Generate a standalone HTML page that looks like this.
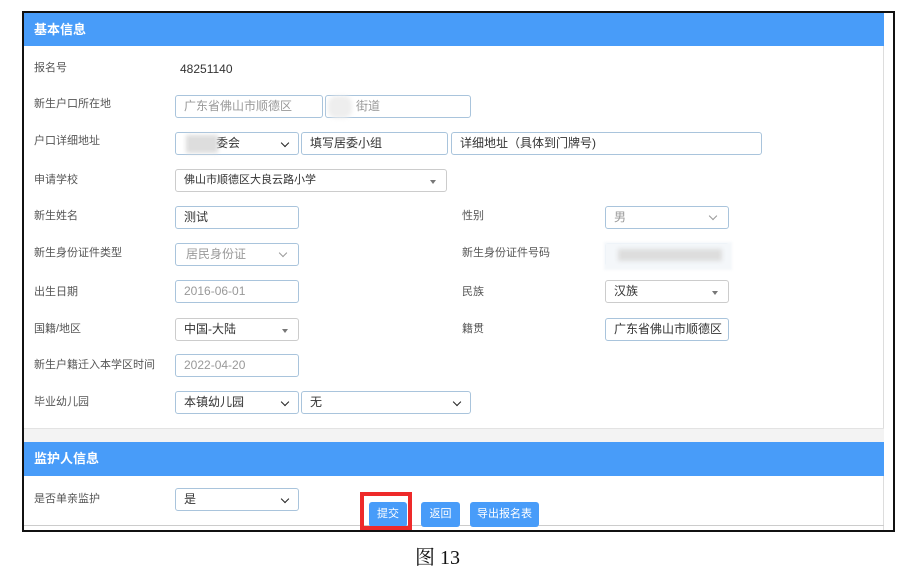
<!DOCTYPE html>
<html><head><meta charset="utf-8"><style>
*{margin:0;padding:0;box-sizing:border-box}
body{width:915px;height:583px;background:#fff;position:relative;overflow:hidden;font-family:"Liberation Sans","Noto Sans CJK SC",sans-serif;font-size:12px;color:#333}
.a{position:absolute}
.frame{left:22px;top:11px;width:873px;height:521px;border:2px solid #111;border-right-width:2px}
.hd{background:#489cf9;color:#fff;font-weight:bold;font-size:13px;padding-left:10px;line-height:34px}
.lb{font-size:11px;color:#555}
.in{border:1px solid #a9c4dc;border-radius:3px;height:23px;line-height:21px;padding-left:8px;font-size:12px;color:#333;background:#fff}
.ph{color:#999}
.ch::after{content:"";position:absolute;right:10px;top:7px;width:5px;height:5px;border-right:1.6px solid #222;border-bottom:1.6px solid #222;transform:rotate(45deg)}
.chl::after{content:"";position:absolute;right:12px;top:6px;width:5px;height:5px;border-right:1px solid #999;border-bottom:1px solid #999;transform:rotate(45deg)}
.tri::after{content:"";position:absolute;right:10px;top:10px;border:3px solid transparent;border-top:4px solid #777}
.btn{background:#489cf9;color:#fff;border-radius:3px;height:25px;line-height:25px;text-align:center;font-size:11px}
.blur{background:#ddd;filter:blur(2px)}
</style></head><body>
<div class="a frame"></div>
<div class="a" style="left:883px;top:13px;width:1px;height:517px;background:#ddd"></div>
<div class="a hd" style="left:24px;top:13px;width:860px;height:33px">基本信息</div>

<div class="a lb" style="left:34px;top:59px">报名号</div>
<div class="a" style="left:180px;top:62px;font-size:12px">48251140</div>

<div class="a lb" style="left:34px;top:95px">新生户口所在地</div>
<div class="a in ph" style="left:175px;top:95px;width:148px">广东省佛山市顺德区</div>
<div class="a in ph" style="left:325px;top:95px;width:146px;padding-left:30px">街道</div>
<div class="a blur" style="left:328px;top:96px;width:24px;height:22px;background:#eee;border-radius:8px"></div>

<div class="a lb" style="left:34px;top:132px">户口详细地址</div>
<div class="a in ch" style="left:175px;top:132px;width:124px;padding-left:40px">委会</div>
<div class="a blur" style="left:186px;top:135px;width:32px;height:18px"></div>
<div class="a in" style="left:301px;top:132px;width:147px">填写居委小组</div>
<div class="a in" style="left:451px;top:132px;width:311px">详细地址（具体到门牌号)</div>

<div class="a lb" style="left:34px;top:171px">申请学校</div>
<div class="a in tri" style="left:175px;top:169px;width:272px;border-color:#ccc;font-size:11px">佛山市顺德区大良云路小学</div>

<div class="a lb" style="left:34px;top:207px">新生姓名</div>
<div class="a in" style="left:175px;top:206px;width:124px">测试</div>
<div class="a lb" style="left:462px;top:207px">性别</div>
<div class="a in chl ph" style="left:605px;top:206px;width:124px">男</div>

<div class="a lb" style="left:34px;top:244px">新生身份证件类型</div>
<div class="a in chl ph" style="left:175px;top:243px;width:124px;padding-left:10px">居民身份证</div>
<div class="a lb" style="left:462px;top:244px">新生身份证件号码</div>
<div class="a in" style="left:605px;top:243px;width:124px"></div>
<div class="a" style="left:604px;top:242px;width:128px;height:28px;background:#f4f7fa;filter:blur(1px)"></div>
<div class="a blur" style="left:618px;top:249px;width:104px;height:12px"></div>

<div class="a lb" style="left:34px;top:283px">出生日期</div>
<div class="a in ph" style="left:175px;top:280px;width:124px">2016-06-01</div>
<div class="a lb" style="left:462px;top:283px">民族</div>
<div class="a in tri" style="left:605px;top:280px;width:124px;border-color:#ccc">汉族</div>

<div class="a lb" style="left:34px;top:320px">国籍/地区</div>
<div class="a in tri" style="left:175px;top:318px;width:124px;border-color:#ccc">中国-大陆</div>
<div class="a lb" style="left:462px;top:320px">籍贯</div>
<div class="a in" style="left:605px;top:318px;width:124px">广东省佛山市顺德区</div>

<div class="a lb" style="left:34px;top:356px">新生户籍迁入本学区时间</div>
<div class="a in ph" style="left:175px;top:354px;width:124px">2022-04-20</div>

<div class="a lb" style="left:34px;top:393px">毕业幼儿园</div>
<div class="a in ch" style="left:175px;top:391px;width:124px">本镇幼儿园</div>
<div class="a in ch" style="left:301px;top:391px;width:170px">无</div>

<div class="a" style="left:24px;top:428px;width:860px;height:14px;background:#f3f3f3;border-top:1px solid #e3e3e3"></div>
<div class="a hd" style="left:24px;top:442px;width:860px;height:34px">监护人信息</div>

<div class="a lb" style="left:34px;top:490px">是否单亲监护</div>
<div class="a in ch" style="left:175px;top:488px;width:124px">是</div>
<div class="a" style="left:24px;top:525px;width:860px;height:1px;background:#ccc"></div>

<div class="a btn" style="left:369px;top:502px;width:38px">提交</div>
<div class="a" style="left:360px;top:492px;width:52px;height:38px;border:4px solid #ee2a2a"></div>
<div class="a btn" style="left:421px;top:502px;width:39px">返回</div>
<div class="a btn" style="left:470px;top:502px;width:69px">导出报名表</div>

<div class="a" style="left:415px;top:541px;font-family:'Liberation Serif','Noto Serif CJK SC',serif;font-size:20px;color:#111">图 13</div>
</body></html>
